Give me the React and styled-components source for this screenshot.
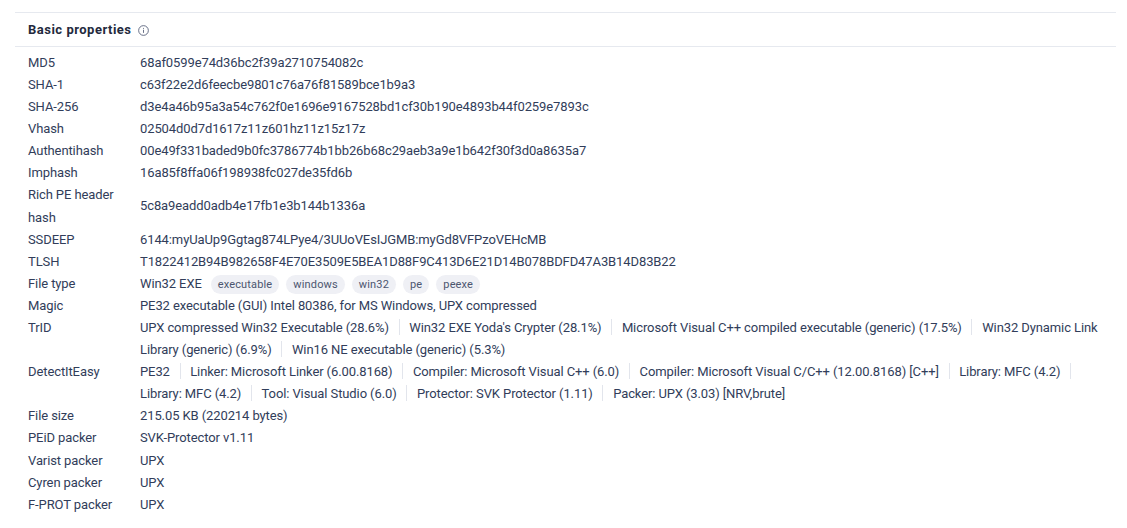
import React from "react";
import styled, { createGlobalStyle } from "styled-components";

const Global = createGlobalStyle`
  html, body { margin: 0; padding: 0; background: #fff; }
  body { font-family: "Roboto", "Liberation Sans", sans-serif; }
`;
const Page = styled.div`
  padding: 12px 11px 0 15px;
  color: #313d5a;
  font-size: 13px;
  line-height: 22.1px;
  letter-spacing: -0.1px;
`;
const Header = styled.div`
  display: flex;
  align-items: center;
  gap: 6.5px;
  height: 33px;
  padding-left: 13px;
  border-top: 1px solid #e6e9ef;
  border-bottom: 1px solid #e6e9ef;
`;
const Title = styled.h2`
  margin: 0;
  font-size: 13px;
  font-weight: 700;
  letter-spacing: 0.5px;
  color: #232a3d;
  padding-top: 2px;
`;
const InfoIcon = styled.svg`
  width: 11px;
  height: 11px;
  margin-top: 1px;
  fill: none;
  stroke: #4a5470;
  stroke-width: 0.9;
`;
const Rows = styled.div`
  padding: 4.85px 0 0 13px;
`;
const Row = styled.div`
  display: grid;
  grid-template-columns: 112px 1fr;
  align-items: ${(p) => (p.$center ? "center" : "start")};
`;
const Label = styled.div`
  padding-right: 12px;
`;
const Value = styled.div`
  padding-right: 16px;
`;
const Tag = styled.span`
  display: inline-block;
  margin-left: ${(p) => (p.$first ? "9px" : "7px")};
  padding: 0 7px;
  height: 19px;
  line-height: 19px;
  border-radius: 10px;
  background: #eff0f5;
  color: #4c566f;
  font-size: 11px;
  letter-spacing: 0.15px;
  vertical-align: 0;
`;
const Item = styled.span`
  &:not(:last-child)::after {
    content: "";
    display: inline-block;
    width: 1px;
    height: 16px;
    background: #e2e5ec;
    margin: 0 9.7px;
    vertical-align: -3px;
  }
`;

const simple = [
  ["MD5", "68af0599e74d36bc2f39a2710754082c"],
  ["SHA-1", "c63f22e2d6feecbe9801c76a76f81589bce1b9a3"],
  ["SHA-256", "d3e4a46b95a3a54c762f0e1696e9167528bd1cf30b190e4893b44f0259e7893c"],
  ["Vhash", "02504d0d7d1617z11z601hz11z15z17z"],
  ["Authentihash", "00e49f331baded9b0fc3786774b1bb26b68c29aeb3a9e1b642f30f3d0a8635a7"],
  ["Imphash", "16a85f8ffa06f198938fc027de35fd6b"],
  ["Rich PE header hash", "5c8a9eadd0adb4e17fb1e3b144b1336a"],
  ["SSDEEP", "6144:myUaUp9Ggtag874LPye4/3UUoVEsIJGMB:myGd8VFPzoVEHcMB"],
  ["TLSH", "T1822412B94B982658F4E70E3509E5BEA1D88F9C413D6E21D14B078BDFD47A3B14D83B22"],
];
const tags = ["executable", "windows", "win32", "pe", "peexe"];
const trid = [
  "UPX compressed Win32 Executable (28.6%)",
  "Win32 EXE Yoda's Crypter (28.1%)",
  "Microsoft Visual C++ compiled executable (generic) (17.5%)",
  "Win32 Dynamic Link Library (generic) (6.9%)",
  "Win16 NE executable (generic) (5.3%)",
];
const die = [
  "PE32",
  "Linker: Microsoft Linker (6.00.8168)",
  "Compiler: Microsoft Visual C++ (6.0)",
  "Compiler: Microsoft Visual C/C++ (12.00.8168) [C++]",
  "Library: MFC (4.2)",
  "Library: MFC (4.2)",
  "Tool: Visual Studio (6.0)",
  "Protector: SVK Protector (1.11)",
  "Packer: UPX (3.03) [NRV,brute]",
];
const tail = [
  ["File size", "215.05 KB (220214 bytes)"],
  ["PEiD packer", "SVK-Protector v1.11"],
  ["Varist packer", "UPX"],
  ["Cyren packer", "UPX"],
  ["F-PROT packer", "UPX"],
];

export default function App() {
  return (
    <Page>
      <Global />
      <Header>
        <Title>Basic properties</Title>
        <InfoIcon viewBox="0 0 12 12">
          <circle cx="6" cy="6" r="5.3" />
          <path d="M6 5.2v3.4M6 3.2v1" />
        </InfoIcon>
      </Header>
      <Rows>
        {simple.map(([k, v]) => (
          <Row key={k} $center>
            <Label>{k}</Label>
            <Value>{v}</Value>
          </Row>
        ))}
        <Row>
          <Label>File type</Label>
          <Value>
            Win32 EXE
            {tags.map((t, i) => (
              <Tag key={t} $first={i === 0}>{t}</Tag>
            ))}
          </Value>
        </Row>
        <Row>
          <Label>Magic</Label>
          <Value>PE32 executable (GUI) Intel 80386, for MS Windows, UPX compressed</Value>
        </Row>
        <Row>
          <Label>TrID</Label>
          <Value>{trid.map((t) => <Item key={t}>{t}</Item>)}</Value>
        </Row>
        <Row>
          <Label>DetectItEasy</Label>
          <Value>{die.map((t, i) => <Item key={i}>{t}</Item>)}</Value>
        </Row>
        {tail.map(([k, v]) => (
          <Row key={k}>
            <Label>{k}</Label>
            <Value>{v}</Value>
          </Row>
        ))}
      </Rows>
    </Page>
  );
}
